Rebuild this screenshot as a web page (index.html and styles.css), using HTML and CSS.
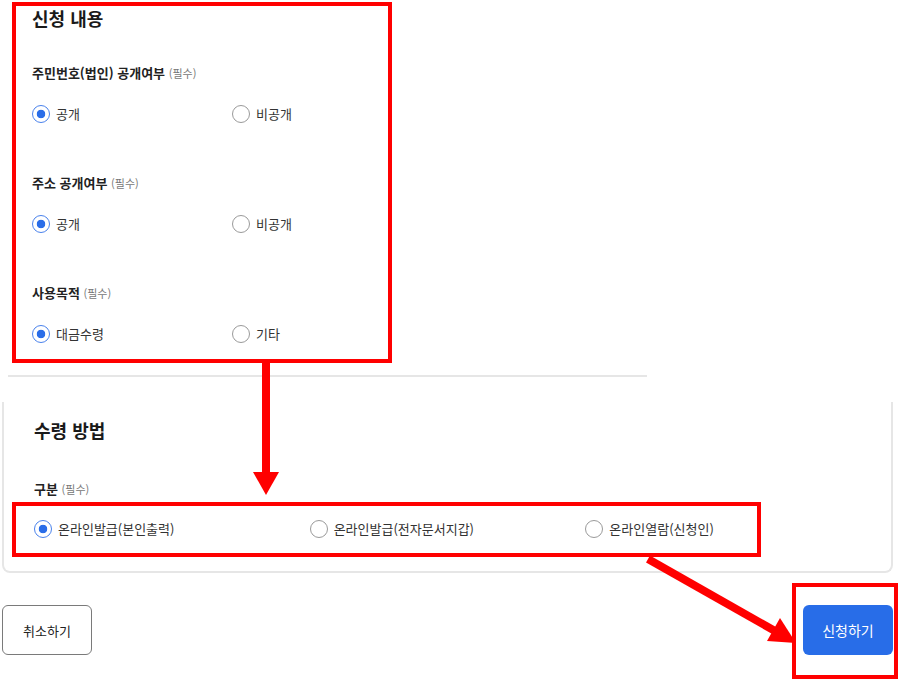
FILE: index.html
```html
<!DOCTYPE html>
<html lang="ko">
  <head>
    <meta charset="UTF-8">
    <meta name="viewport" content="width=device-width, initial-scale=1.0">
    <title>신청 내용</title>
    <link rel="stylesheet" href="styles.css">
  </head>
  <body>
    <div class="page">
      <section class="apply">
        <h2 class="title">신청 내용</h2>
        <div class="field">
          <p class="label">주민번호(법인) 공개여부 <span class="req">(필수)</span></p>
          <div class="options two">
            <label class="opt"><input type="radio" name="idno" checked><span>공개</span></label>
            <label class="opt"><input type="radio" name="idno"><span>비공개</span></label>
          </div>
        </div>
        <div class="field">
          <p class="label">주소 공개여부 <span class="req">(필수)</span></p>
          <div class="options two">
            <label class="opt"><input type="radio" name="addr" checked><span>공개</span></label>
            <label class="opt"><input type="radio" name="addr"><span>비공개</span></label>
          </div>
        </div>
        <div class="field">
          <p class="label">사용목적 <span class="req">(필수)</span></p>
          <div class="options two">
            <label class="opt"><input type="radio" name="purpose" checked><span>대금수령</span></label>
            <label class="opt"><input type="radio" name="purpose"><span>기타</span></label>
          </div>
        </div>
      </section>

      <section class="receive">
        <h2 class="title">수령 방법</h2>
        <div class="field">
          <p class="label">구분 <span class="req">(필수)</span></p>
          <div class="options three">
            <label class="opt"><input type="radio" name="method" checked><span>온라인발급(본인출력)</span></label>
            <label class="opt"><input type="radio" name="method"><span>온라인발급(전자문서지갑)</span></label>
            <label class="opt"><input type="radio" name="method"><span>온라인열람(신청인)</span></label>
          </div>
        </div>
      </section>

      <div class="actions">
        <button type="button" class="btn btn-cancel">취소하기</button>
        <button type="button" class="btn btn-primary">신청하기</button>
      </div>

      <!-- annotation marks drawn over the page -->
      <svg class="annot" width="907" height="683" viewBox="0 0 907 683">
        <g fill="none" stroke="#ff0000" stroke-width="4">
          <rect x="14" y="4" width="376" height="357"/>
          <rect x="14" y="504" width="745" height="51"/>
          <rect x="794" y="585" width="102" height="92"/>
        </g>
        <g fill="#ff0000">
          <rect x="262" y="362" width="8" height="112"/>
          <polygon points="253,472 279,472 266,495"/>
          <line x1="648" y1="559" x2="775" y2="631" stroke="#ff0000" stroke-width="8"/>
          <polygon points="767,641 780,618 796,643"/>
        </g>
      </svg>
    </div>
  </body>
</html>
```

FILE: styles.css
```css
body {
  margin: 0;
  font-family: "Noto Sans CJK KR", "Noto Sans", sans-serif;
  color: #222;
  background: #fff;
}
.page {
  position: relative;
  width: 907px;
  height: 683px;
  overflow: hidden;
}
.apply {
  box-sizing: border-box;
  width: 639px;
  margin-left: 8px;
  padding: 5px 0 31px 24px;
  border-bottom: 2px solid #e6e6e6;
}
.title {
  margin: 0;
  font-size: 18px;
  line-height: 26px;
  font-weight: 700;
  color: #1a1a1a;
}
.field {
  margin-top: 32px;
}
.field + .field {
  margin-top: 49px;
}
.label {
  height: 20px;
  margin: 0 0 21px;
  font-size: 13px;
  line-height: 20px;
  font-weight: 700;
}
.req {
  font-size: 11px;
  font-weight: 400;
  color: #777;
}
.options {
  display: grid;
}
.options.two {
  grid-template-columns: 200px 200px;
}
.options.three {
  grid-template-columns: 1fr 1fr 1fr;
}
.opt {
  display: flex;
  align-items: center;
  gap: 6px;
  height: 20px;
  font-size: 13px;
  line-height: 20px;
  color: #333;
}
.opt input {
  appearance: none;
  -webkit-appearance: none;
  box-sizing: border-box;
  width: 18px;
  height: 18px;
  margin: 0;
  border: 1.5px solid #9a9a9a;
  border-radius: 50%;
  background: #fff;
}
.opt input:checked {
  border-color: #4a82ec;
  background: radial-gradient(circle, #2a6de8 0 4px, #fff 4.6px);
}
.receive {
  margin: 25px 14px 0 2px;
  padding: 15px 30px 32px;
  border: 2px solid #e6e6e6;
  border-top: 0;
  border-radius: 0 0 8px 8px;
}
.receive .field {
  margin-top: 36px;
}
.receive .label {
  margin-bottom: 20px;
}
.actions {
  display: flex;
  justify-content: space-between;
  margin: 32px 14px 0 2px;
}
.btn {
  width: 90px;
  height: 50px;
  border-radius: 6px;
  font-family: inherit;
  font-size: 13px;
  cursor: pointer;
}
.btn-cancel {
  background: #fff;
  border: 1px solid #7a7a7a;
  color: #222;
}
.btn-primary {
  background: #286de8;
  border: 0;
  color: #fff;
  font-size: 14px;
}
.annot {
  position: absolute;
  top: 0;
  left: 0;
  pointer-events: none;
}
```
